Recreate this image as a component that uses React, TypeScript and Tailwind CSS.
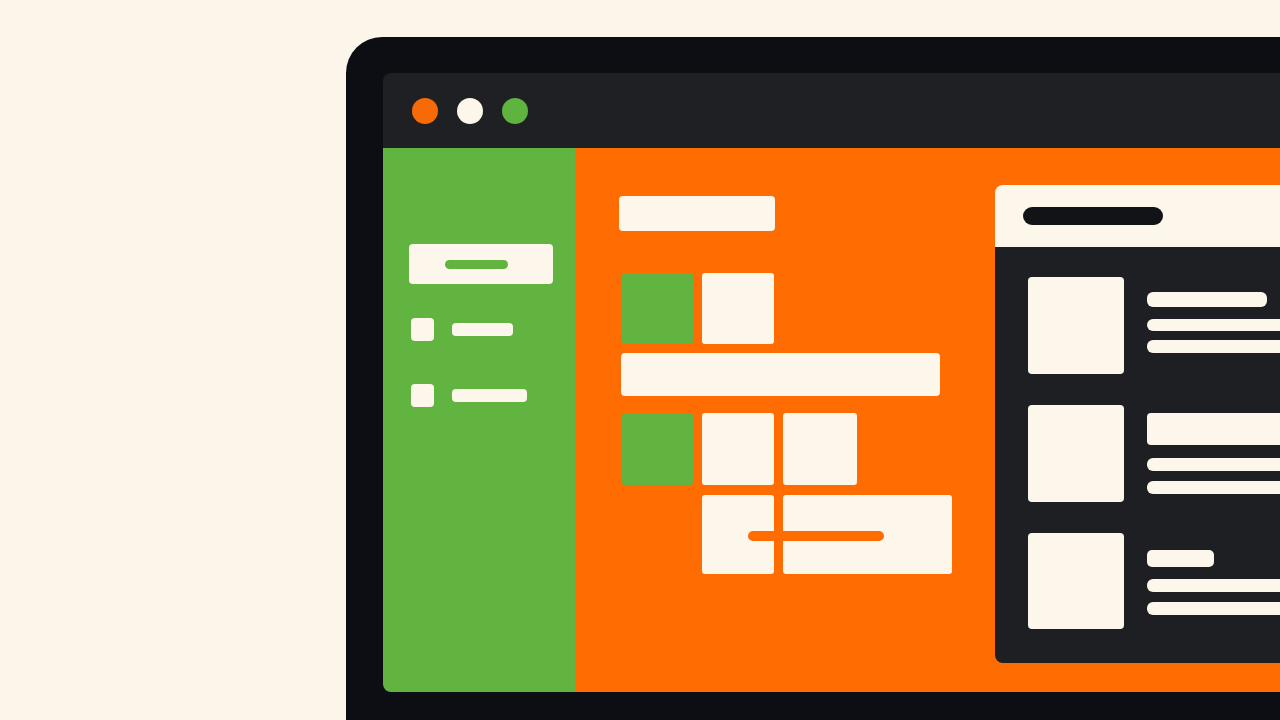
import React from "react";

const cream = "bg-[#fdf6ea]";

export default function App() {
  return (
    <div className="w-[1280px] h-[720px] overflow-hidden bg-[#fcf5ea] relative">
      <div className="ml-[346px] mt-[37px] w-[980px] h-[720px] bg-[#0c0e13] rounded-tl-[36px] pl-[37px] pt-[36px]">
        <div className="w-[940px] flex flex-col rounded-[8px] overflow-hidden">
          {/* title bar */}
          <div className="h-[75px] bg-[#1f2024] flex items-center pl-[29px] gap-[19px]">
            <div className="w-[26px] h-[26px] rounded-full bg-[#f86a06]" />
            <div className="w-[26px] h-[26px] rounded-full bg-[#fdf6ea]" />
            <div className="w-[26px] h-[26px] rounded-full bg-[#5fb33f]" />
          </div>
          <div className="h-[544px] flex">
            {/* sidebar */}
            <div className="w-[192px] bg-[#62b440] flex flex-col">
              <div className={`ml-[26px] mt-[96px] w-[144px] h-[40px] rounded-[4px] ${cream} flex items-center`}>
                <div className="ml-[36px] w-[63px] h-[9px] rounded-full bg-[#62b440]" />
              </div>
              <div className="ml-[28px] mt-[34px] flex items-center gap-[18px]">
                <div className={`w-[23px] h-[23px] rounded-[4px] ${cream}`} />
                <div className={`w-[61px] h-[13px] rounded-[4px] ${cream}`} />
              </div>
              <div className="ml-[28px] mt-[43px] flex items-center gap-[18px]">
                <div className={`w-[23px] h-[23px] rounded-[4px] ${cream}`} />
                <div className={`w-[75px] h-[13px] rounded-[4px] ${cream}`} />
              </div>
            </div>
            {/* main */}
            <div className="flex-1 bg-[#fe6c02] flex">
              <div className="ml-[44px] mt-[48px] w-[333px] flex flex-col">
                <div className={`w-[156px] h-[35px] rounded-[4px] ${cream}`} />
                <div className="mt-[42px] ml-[3px] flex gap-[9px]">
                  <div className="w-[71px] h-[71px] rounded-[3px] bg-[#62b440]" />
                  <div className={`w-[72px] h-[71px] rounded-[3px] ${cream}`} />
                </div>
                <div className={`mt-[9px] ml-[2px] w-[319px] h-[43px] rounded-[4px] ${cream}`} />
                <div className="mt-[17px] ml-[3px] flex gap-[9px]">
                  <div className="w-[71px] h-[72px] rounded-[3px] bg-[#62b440]" />
                  <div className={`w-[72px] h-[72px] rounded-[3px] ${cream}`} />
                  <div className={`w-[74px] h-[72px] rounded-[3px] ${cream}`} />
                </div>
                <div className="mt-[10px] ml-[83px] flex gap-[9px] relative">
                  <div className={`w-[72px] h-[79px] rounded-[3px] ${cream}`} />
                  <div className={`w-[169px] h-[79px] rounded-[3px] ${cream}`} />
                  <div className="absolute left-[46px] top-[36px] w-[136px] h-[10px] rounded-full bg-[#fe6c02]" />
                </div>
              </div>
              {/* right panel */}
              <div className="ml-[43px] mt-[37px] w-[320px] h-[478px] rounded-l-[8px] overflow-hidden flex flex-col">
                <div className={`h-[62px] ${cream} flex items-center`}>
                  <div className="ml-[28px] w-[140px] h-[18px] rounded-full bg-[#121317]" />
                </div>
                <div className="flex-1 bg-[#1e1f22] pl-[33px] pt-[30px] flex flex-col gap-[31px]">
                  <div className="flex">
                    <div className={`w-[96px] h-[97px] rounded-[4px] ${cream}`} />
                    <div className="ml-[23px] flex-1 flex flex-col">
                      <div className={`mt-[15px] w-[120px] h-[15px] rounded-[6px] ${cream}`} />
                      <div className={`mt-[12px] w-full h-[12px] rounded-[6px] ${cream}`} />
                      <div className={`mt-[9px] w-full h-[13px] rounded-[6px] ${cream}`} />
                    </div>
                  </div>
                  <div className="flex">
                    <div className={`w-[96px] h-[97px] rounded-[4px] ${cream}`} />
                    <div className="ml-[23px] flex-1 flex flex-col">
                      <div className={`mt-[8px] w-full h-[32px] rounded-[4px] ${cream}`} />
                      <div className={`mt-[13px] w-full h-[13px] rounded-[6px] ${cream}`} />
                      <div className={`mt-[10px] w-full h-[13px] rounded-[6px] ${cream}`} />
                    </div>
                  </div>
                  <div className="flex">
                    <div className={`w-[96px] h-[96px] rounded-[4px] ${cream}`} />
                    <div className="ml-[23px] flex-1 flex flex-col">
                      <div className={`mt-[17px] w-[67px] h-[17px] rounded-[5px] ${cream}`} />
                      <div className={`mt-[12px] w-full h-[13px] rounded-[6px] ${cream}`} />
                      <div className={`mt-[10px] w-full h-[13px] rounded-[6px] ${cream}`} />
                    </div>
                  </div>
                </div>
              </div>
            </div>
          </div>
        </div>
      </div>
    </div>
  );
}
